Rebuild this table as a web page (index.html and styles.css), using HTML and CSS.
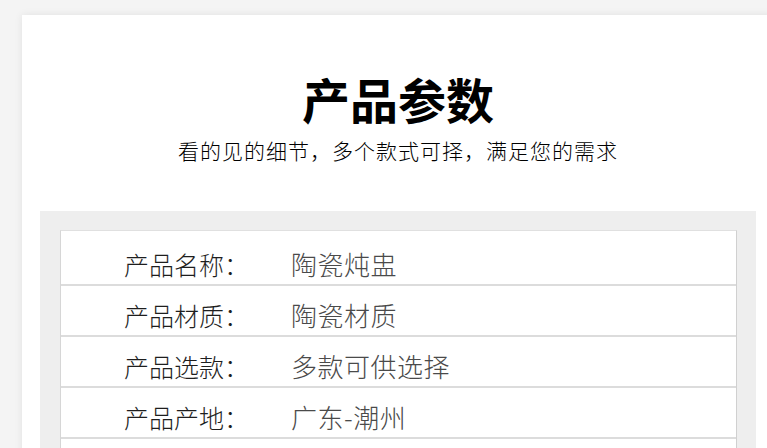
FILE: index.html
```html
<!DOCTYPE html>
<html lang="zh-CN">
<head>
<meta charset="utf-8">
<title>产品参数</title>
<link rel="stylesheet" href="styles.css">
</head>
<body>
<div class="card">
  <h1 class="title">产品参数</h1>
  <p class="subtitle">看的见的细节，多个款式可择，满足您的需求</p>
  <div class="panel">
    <div class="table">
      <div class="row"><span class="label">产品名称：</span><span class="value">陶瓷炖盅</span></div>
      <div class="row"><span class="label">产品材质：</span><span class="value">陶瓷材质</span></div>
      <div class="row"><span class="label">产品选款：</span><span class="value">多款可供选择</span></div>
      <div class="row"><span class="label">产品产地：</span><span class="value">广东-潮州</span></div>
      <div class="row"></div>
    </div>
  </div>
</div>
</body>
</html>
```

FILE: styles.css
```css
html, body {
  margin: 0;
  padding: 0;
  background: #f4f4f4;
  overflow: hidden;
  font-family: "Noto Sans CJK SC", "Noto Sans", sans-serif;
}

.card {
  margin: 15px 0 0 22px;
  width: 752px;
  background: #ffffff;
  box-shadow: 0 0 8px rgba(0, 0, 0, 0.08);
  padding-top: 53px;
  padding-bottom: 40px;
}

.title {
  margin: 0;
  font-size: 48px;
  line-height: 60px;
  font-weight: 700;
  color: #000;
  text-align: center;
}

.subtitle {
  margin: 7px 0 0;
  font-size: 21px;
  line-height: 30px;
  font-weight: 300;
  color: #000;
  text-align: center;
  letter-spacing: 1px;
}

.panel {
  margin: 46px 18px 0;
  background: #eeeeee;
  padding: 19px 19px 20px 20px;
}

.table {
  background: #fff;
  border-top: 1px solid #e0e0e0;
  border-left: 1px solid #d6d6d6;
  border-right: 1px solid #d0d0d0;
  padding-top: 4px;
}

.row {
  display: flex;
  align-items: center;
  padding-top: 8px;
  height: 41px;
  border-bottom: 2px solid #dcdcdc;
}

.label {
  padding-left: 63px;
  width: 167px;
  font-size: 25px;
  line-height: 30px;
  font-weight: 300;
  color: #1e1e1e;
}

.value {
  font-size: 26px;
  line-height: 30px;
  font-weight: 300;
  color: #4a4a4a;
  letter-spacing: 0.5px;
}
```
